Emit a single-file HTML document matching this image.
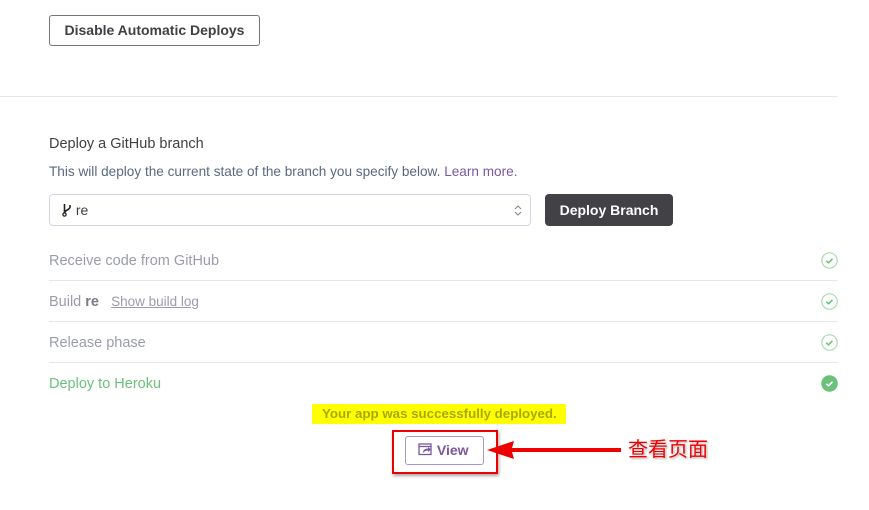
<!DOCTYPE html>
<html><head><meta charset="utf-8"><style>
*{box-sizing:border-box;margin:0;padding:0}
body{width:869px;height:510px;background:#fff;font-family:"Liberation Sans",sans-serif;position:relative;overflow:hidden}
.a{position:absolute;white-space:nowrap}
.row{position:absolute;left:49px;width:789px;height:41px;border-bottom:1px solid #e6e8ef;font-size:14.5px;color:#9a9cac;line-height:42px}
.chk{position:absolute;right:0;top:12px;width:17px;height:17px}
</style></head><body>
<div class="a" style="left:49px;top:15px;width:211px;height:31px;border:1px solid #777;border-radius:3px;font-size:14px;font-weight:bold;color:#3f3f44;text-align:center;line-height:29px">Disable Automatic Deploys</div>
<div class="a" style="left:0;top:96px;width:838px;height:1px;background:#e6e8ef"></div>
<div class="a" style="left:49px;top:136px;font-size:14.5px;color:#3f3f44">Deploy a GitHub branch</div>
<div class="a" style="left:49px;top:164px;font-size:13.6px;color:#596981">This will deploy the current state of the branch you specify below. <span style="color:#79589f">Learn more.</span></div>
<div class="a" style="left:49px;top:194px;width:482px;height:32px;border:1px solid #d3d6e0;border-radius:4px;font-size:14px;color:#3f3f44;line-height:30px;padding-left:12px">
<svg width="10" height="14" viewBox="0 0 10 14" style="vertical-align:-2px"><circle cx="2.5" cy="11.5" r="1.6" fill="none" stroke="#222" stroke-width="1.3"/><path d="M2.5 1v9M8 2v2c0 3-5.5 3-5.5 6" fill="none" stroke="#222" stroke-width="1.6"/></svg> re
<svg class="a" style="right:8px;top:9px" width="8" height="13" viewBox="0 0 8 13"><path d="M1 5l3-3 3 3M1 8l3 3 3-3" fill="none" stroke="#888" stroke-width="1.1"/></svg></div>
<div class="a" style="left:545px;top:194px;width:128px;height:32px;background:#414146;border-radius:4px;color:#fff;font-size:14px;font-weight:bold;text-align:center;line-height:32px">Deploy Branch</div>
<div class="row" style="top:240px">Receive code from GitHub<svg class="chk" viewBox="0 0 17 17"><circle cx="8.5" cy="8.5" r="7.7" fill="none" stroke="#a8dcae" stroke-width="1.2"/><path d="M5.3 8.8l2.2 2 4-4" fill="none" stroke="#6cc17a" stroke-width="1.6"/></svg></div>
<div class="row" style="top:281px">Build <b style="color:#7a7c8a">re</b> &nbsp; <span style="text-decoration:underline;font-size:13.5px;color:#9a9cac">Show build log</span><svg class="chk" viewBox="0 0 17 17"><circle cx="8.5" cy="8.5" r="7.7" fill="none" stroke="#a8dcae" stroke-width="1.2"/><path d="M5.3 8.8l2.2 2 4-4" fill="none" stroke="#6cc17a" stroke-width="1.6"/></svg></div>
<div class="row" style="top:322px">Release phase<svg class="chk" viewBox="0 0 17 17"><circle cx="8.5" cy="8.5" r="7.7" fill="none" stroke="#a8dcae" stroke-width="1.2"/><path d="M5.3 8.8l2.2 2 4-4" fill="none" stroke="#6cc17a" stroke-width="1.6"/></svg></div>
<div class="row" style="top:363px;border:none;color:#6cc17a">Deploy to Heroku<svg class="chk" viewBox="0 0 17 17"><circle cx="8.5" cy="8.5" r="8.3" fill="#6cc17a"/><path d="M5.3 8.8l2.2 2 4-4" fill="none" stroke="#fff" stroke-width="1.6"/></svg></div>
<div class="a" style="left:312px;top:404px;width:254px;height:20px;background:#ffff00;color:#a8a800;font-size:13.3px;font-weight:bold;line-height:20px;padding-left:10px">Your app was successfully deployed.</div>
<div class="a" style="left:392px;top:430px;width:106px;height:44px;border:2px solid #e00;box-shadow:1px 2px 3px rgba(0,0,0,.35)"></div>
<div class="a" style="left:405px;top:436px;width:79px;height:29px;border:1px solid #a998c7;border-radius:3px;color:#79589f;font-size:14px;font-weight:bold;line-height:27px;padding-left:12px">
<svg width="15" height="13" viewBox="0 0 15 13" style="vertical-align:-1px"><rect x="1" y="1" width="12" height="10.5" fill="none" stroke="#79589f" stroke-width="1.3"/><path d="M1 3.5h12" stroke="#79589f" stroke-width="1.3"/><path d="M5 10c0-3 2-4.5 5-4.5V4l3 2.5-3 2.5V7.5c-2 0-3.5.8-5 2.5z" fill="#79589f"/></svg> View</div>
<svg class="a" style="left:484px;top:438px" width="140" height="24" viewBox="0 0 140 24"><path d="M3 12 L30 3 L28 10 L137 10 L137 14 L28 14 L30 21 Z" fill="#e00"/></svg>
<div class="a" style="left:628px;top:433px;font-family:'Liberation Sans','Noto Sans CJK SC',sans-serif;font-size:20px;color:#e00;text-shadow:0 0 2px #fff,1px 1px 2px #888">查看页面</div>
</body></html>
